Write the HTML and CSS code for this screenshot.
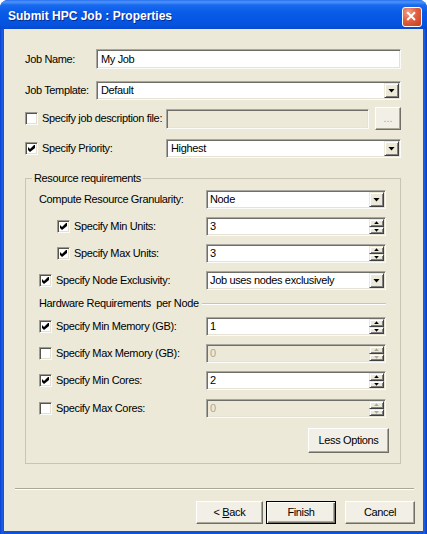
FILE: index.html
```html
<!DOCTYPE html>
<html>
<head>
<meta charset="utf-8">
<title>Submit HPC Job : Properties</title>
<link rel="stylesheet" href="styles.css">
</head>
<body>
<div class="window">
  <div class="titlebar">
    <span class="title">Submit HPC Job : Properties</span>
    <span class="close"><svg viewBox="0 0 20 20" width="18" height="18"><path d="M5.5 5.5 L12.5 12.5 M12.5 5.5 L5.5 12.5" stroke="#fff" stroke-width="2.2" stroke-linecap="square" fill="none"/></svg></span>
  </div>
  <div class="client">
    <div class="form">
      <div class="row r-name">
        <span class="lbl-top">Job Name:</span>
        <div class="box grow"><span class="val">My Job</span></div>
      </div>
      <div class="row r-template">
        <span class="lbl-top">Job Template:</span>
        <div class="box grow"><span class="val">Default</span><span class="dd"><i class="tri"></i></span></div>
      </div>
      <div class="row r-desc">
        <span class="lbl-wide"><span class="cb"></span>Specify job description file:</span>
        <div class="box grow off"></div>
        <span class="btn browse">...</span>
      </div>
      <div class="row r-pri">
        <span class="lbl-wide"><span class="cb"><svg class="ck" viewBox="0 0 7 7" width="7" height="7"><path d="M0 2 L2 4 L6 0 L7 0 L7 3 L2 7 L0 5 Z"/></svg></span>Specify Priority:</span>
        <div class="box grow"><span class="val">Highest</span><span class="dd"><i class="tri"></i></span></div>
      </div>

      <div class="group">
        <div class="group-title">Resource requirements</div>
        <div class="grow-row g-first">
          <span class="glbl">Compute Resource Granularity:</span>
          <div class="box gfield"><span class="val">Node</span><span class="dd"><i class="tri"></i></span></div>
        </div>
        <div class="grow-row">
          <span class="glbl indent"><span class="cb"><svg class="ck" viewBox="0 0 7 7" width="7" height="7"><path d="M0 2 L2 4 L6 0 L7 0 L7 3 L2 7 L0 5 Z"/></svg></span>Specify Min Units:</span>
          <div class="box gfield"><span class="val">3</span><span class="spin"><span class="sb"><i class="up"></i></span><span class="sb"><i class="down"></i></span></span></div>
        </div>
        <div class="grow-row">
          <span class="glbl indent"><span class="cb"><svg class="ck" viewBox="0 0 7 7" width="7" height="7"><path d="M0 2 L2 4 L6 0 L7 0 L7 3 L2 7 L0 5 Z"/></svg></span>Specify Max Units:</span>
          <div class="box gfield"><span class="val">3</span><span class="spin"><span class="sb"><i class="up"></i></span><span class="sb"><i class="down"></i></span></span></div>
        </div>
        <div class="grow-row">
          <span class="glbl"><span class="cb"><svg class="ck" viewBox="0 0 7 7" width="7" height="7"><path d="M0 2 L2 4 L6 0 L7 0 L7 3 L2 7 L0 5 Z"/></svg></span>Specify Node Exclusivity:</span>
          <div class="box gfield"><span class="val">Job uses nodes exclusively</span><span class="dd"><i class="tri"></i></span></div>
        </div>

        <div class="subhead">Hardware Requirements  per Node</div>

        <div class="grow-row g-after-head">
          <span class="glbl"><span class="cb"><svg class="ck" viewBox="0 0 7 7" width="7" height="7"><path d="M0 2 L2 4 L6 0 L7 0 L7 3 L2 7 L0 5 Z"/></svg></span>Specify Min Memory (GB):</span>
          <div class="box gfield"><span class="val">1</span><span class="spin"><span class="sb"><i class="up"></i></span><span class="sb"><i class="down"></i></span></span></div>
        </div>
        <div class="grow-row">
          <span class="glbl"><span class="cb"></span>Specify Max Memory (GB):</span>
          <div class="box gfield off"><span class="val">0</span><span class="spin"><span class="sb"><i class="up"></i></span><span class="sb"><i class="down"></i></span></span></div>
        </div>
        <div class="grow-row">
          <span class="glbl"><span class="cb"><svg class="ck" viewBox="0 0 7 7" width="7" height="7"><path d="M0 2 L2 4 L6 0 L7 0 L7 3 L2 7 L0 5 Z"/></svg></span>Specify Min Cores:</span>
          <div class="box gfield"><span class="val">2</span><span class="spin"><span class="sb"><i class="up"></i></span><span class="sb"><i class="down"></i></span></span></div>
        </div>
        <div class="grow-row g-last">
          <span class="glbl"><span class="cb"></span>Specify Max Cores:</span>
          <div class="box gfield off"><span class="val">0</span><span class="spin"><span class="sb"><i class="up"></i></span><span class="sb"><i class="down"></i></span></span></div>
        </div>

        <div class="less-row"><span class="btn less">Less Options</span></div>
      </div>
    </div>

    <div class="sep"></div>

    <div class="actions">
      <span class="btn back"><span class="btn-text">&lt; <u>B</u>ack</span></span>
      <span class="btn finish">Finish</span>
      <span class="btn cancel">Cancel</span>
    </div>
  </div>
</div>
</body>
</html>
```

FILE: styles.css
```css
html, body {
  margin: 0;
  padding: 0;
  background: #ffffff;
}

body {
  font-family: "Liberation Sans", Arial, sans-serif;
  font-size: 11px;
  line-height: 13px;
  letter-spacing: -0.35px;
  color: #000;
}

.window {
  width: 427px;
  height: 534px;
  display: flex;
  flex-direction: column;
  background: linear-gradient(to right, #0a3fcf 0, #1c5fe6 2px, #0b52de 4px, #0b52de 423px, #1d62e8 424px, #0838c4 427px);
  border-radius: 8px 8px 0 0;
  overflow: hidden;
}

.titlebar {
  flex: none;
  height: 29px;
  box-sizing: border-box;
  padding: 4px 5px 0 8px;
  display: flex;
  align-items: center;
  background: linear-gradient(to bottom, #2a6ff0 0, #4d95fa 2px, #1a6af0 5px, #0a5ce8 12px, #0656e4 20px, #0451db 26px, #0a48cc 29px);
}

.title {
  flex: 1;
  color: #fff;
  font-weight: bold;
  font-size: 12px;
  letter-spacing: 0;
  text-shadow: 1px 1px 0 #0b2a8c;
}

.close {
  width: 20px;
  height: 20px;
  box-sizing: border-box;
  border: 1px solid #fff;
  border-radius: 3px;
  background: radial-gradient(circle at 30% 25%, #f3a08a 0, #e06040 45%, #c63d1d 100%);
  display: flex;
  align-items: center;
  justify-content: center;
}

.client {
  flex: 1;
  margin: 0 4px 3px 4px;
  background: #ece9d8;
  display: flex;
  flex-direction: column;
}

.form {
  padding: 0 22px 0 21px;
  display: flex;
  flex-direction: column;
}

.row {
  display: flex;
  align-items: center;
}

.r-name { height: 20px; margin-top: 20px; }
.r-template { height: 19px; margin-top: 12px; }
.r-desc { height: 23px; margin-top: 7px; }
.r-pri { height: 19px; margin-top: 9px; }

.lbl-top {
  flex: none;
  width: 71px;
}

.lbl-wide {
  flex: none;
  width: 141px;
  display: flex;
  align-items: center;
  gap: 4px;
}

/* text / combo fields */
.box {
  box-sizing: border-box;
  height: 100%;
  background: #fff;
  border: 1px solid;
  border-color: #a7a6a0 #fbfbf8 #fbfbf8 #a7a6a0;
  box-shadow: inset 1px 1px 0 #6f6e68, inset -1px -1px 0 #e6e3d6;
  display: flex;
  align-items: center;
  padding-left: 3px;
  overflow: hidden;
  white-space: nowrap;
}

.r-desc .box { height: 20px; }

.grow {
  flex: 1;
  min-width: 0;
}

.box.off {
  background: #ece9d8;
  color: #aca899;
}

.val {
  padding-left: 1px;
}

.dd {
  margin-left: auto;
  margin-right: 1px;
  flex: none;
  width: 15px;
  height: 15px;
  box-sizing: border-box;
  background: #ece9d8;
  border: 1px solid;
  border-color: #ece9d8 #404040 #404040 #ece9d8;
  box-shadow: inset 1px 1px 0 #fff, inset -1px -1px 0 #808080;
  display: flex;
  align-items: center;
  justify-content: center;
}

.tri {
  display: block;
  width: 7px;
  height: 4px;
  background: #000;
  clip-path: polygon(0 0, 100% 0, 50% 100%);
}

.spin {
  margin-left: auto;
  margin-right: 1px;
  flex: none;
  width: 15px;
  height: 15px;
  display: flex;
  flex-direction: column;
}

.sb {
  flex: 1;
  box-sizing: border-box;
  background: #ece9d8;
  border: 1px solid;
  border-color: #ece9d8 #404040 #404040 #ece9d8;
  box-shadow: inset 1px 1px 0 #fff, inset -1px -1px 0 #808080;
  display: flex;
  align-items: center;
  justify-content: center;
}

.up, .down {
  display: block;
  width: 5px;
  height: 3px;
  background: #000;
}

.up { clip-path: polygon(50% 0, 100% 100%, 0 100%); }
.down { clip-path: polygon(0 0, 100% 0, 50% 100%); }

.off .up, .off .down { background: #aca899; }

/* checkbox */
.cb {
  flex: none;
  width: 13px;
  height: 13px;
  box-sizing: border-box;
  background: #fff;
  border: 1px solid;
  border-color: #9d9b92 #fbfbf8 #fbfbf8 #9d9b92;
  box-shadow: inset 1px 1px 0 #55544f, inset -1px -1px 0 #e3e0d2;
  display: flex;
  align-items: center;
  justify-content: center;
}

.ck {
  display: block;
  fill: #000;
}

/* buttons */
.btn {
  flex: none;
  box-sizing: border-box;
  height: 23px;
  display: flex;
  align-items: center;
  justify-content: center;
  background: #f1efe6;
  border: 1px solid;
  border-color: #fff #716f64 #716f64 #fff;
  box-shadow: inset -1px -1px 0 #aca899;
}

.btn-text {
  white-space: pre;
}

.browse {
  width: 26px;
  margin-left: 6px;
  color: #aca899;
  letter-spacing: 0;
}

/* group box */
.group {
  margin-top: 20px;
  border: 1px solid #c8c5b4;
  padding: 0 14px 10px 13px;
  display: flex;
  flex-direction: column;
}

.group-title {
  align-self: flex-start;
  margin: -7px 0 0 -7px;
  padding: 0 2px;
  background: #ece9d8;
}

.grow-row {
  display: flex;
  align-items: center;
  height: 19px;
  margin-top: 8px;
}

.g-first { margin-top: 5px; }
.g-after-head { margin-top: 7px; }
.g-last { margin-top: 9px; }

.glbl {
  flex: none;
  width: 167px;
  display: flex;
  align-items: center;
  gap: 4px;
  white-space: nowrap;
}

.indent {
  padding-left: 18px;
  width: 149px;
}

.gfield {
  width: 180px;
  flex: none;
  padding-left: 2px;
}

.subhead {
  display: flex;
  align-items: center;
  height: 13px;
  margin-top: 7px;
  white-space: pre;
}

.subhead::after {
  content: "";
  flex: 1;
  margin-left: 3px;
  border-top: 1px solid #c8c5b4;
  border-bottom: 1px solid #fff;
}

.less-row {
  display: flex;
  justify-content: flex-end;
  margin-top: 10px;
  margin-right: -3px;
}

.less {
  width: 81px;
  height: 25px;
}

.sep {
  margin: 24px 9px 0 11px;
  border-top: 1px solid #aca899;
  border-bottom: 1px solid #fff;
}

.actions {
  display: flex;
  justify-content: flex-end;
  margin-top: 11px;
  padding-right: 8px;
}

.back { width: 67px; margin-right: 3px; }
.finish {
  width: 70px;
  margin-right: 9px;
  border: 1px solid #000;
  box-shadow: inset 1px 1px 0 #fff, inset -1px -1px 0 #716f64, inset -2px -2px 0 #aca899;
}
.cancel { width: 70px; }
```
